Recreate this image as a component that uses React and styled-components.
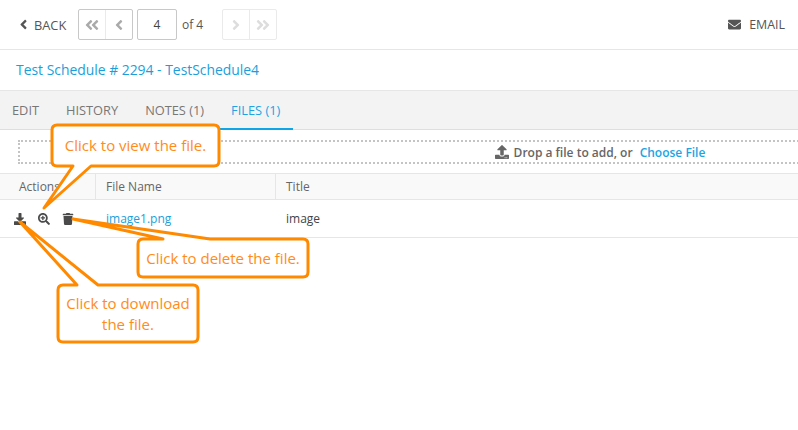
import React from 'react';
import styled, { createGlobalStyle } from 'styled-components';
import { FaAngleLeft, FaAngleRight, FaAngleDoubleLeft, FaAngleDoubleRight, FaEnvelope, FaUpload, FaDownload, FaSearchPlus, FaTrash } from 'react-icons/fa';

const GlobalStyle = createGlobalStyle`
    html, body {
        margin: 0;
        padding: 0;
        background: white;
        overflow: hidden;
    }
    body {
        font-family: "Open Sans", "Liberation Sans", sans-serif;
        font-size: 12px;
        color: #555;
    }
`;

const Page = styled.div`
    position: relative;
    width: 798px;
    height: 430px;
    overflow: hidden;
`;

const TopBar = styled.div`
    display: flex;
    align-items: center;
    height: 49px;
    padding: 0 13px 0 17px;
    border-bottom: 1px solid #e6e6e6;
`;

const BackLink = styled.div`
    display: flex;
    align-items: center;
    gap: 3px;
    width: 61px;
    font-size: 12.8px;
    color: #555;
    svg { font-size: 15px; margin-left: -1px; }
`;

const PagerGroup = styled.div`
    display: flex;
    width: 55px;
    height: 31px;
    box-sizing: border-box;
    border: 1px solid ${props => props.$disabled ? '#eaeaea' : '#c8c8c8'};
    border-radius: 2px;
    color: ${props => props.$disabled ? '#ddd' : '#aaa'};
`;

const PagerButton = styled.div`
    display: flex;
    flex: 1;
    align-items: center;
    justify-content: center;
    font-size: 16px;
    & + & { border-left: 1px solid ${props => props.$disabled ? '#eaeaea' : '#c8c8c8'}; }
`;

const PageInput = styled.div`
    display: flex;
    align-items: center;
    justify-content: center;
    width: 40px;
    height: 31px;
    box-sizing: border-box;
    margin-left: 4px;
    border: 1px solid #c8c8c8;
    border-radius: 2px;
    font-size: 12px;
    color: #444;
`;

const PageCount = styled.div`
    width: 40px;
    margin-left: 5px;
    color: #555;
    font-size: 12px;
`;

const EmailLink = styled.div`
    display: flex;
    align-items: center;
    gap: 8px;
    margin-left: auto;
    color: #555;
    font-size: 12.4px;
    svg { font-size: 13px; }
`;

const TitleRow = styled.div`
    height: 40px;
    padding-left: 16px;
    font-size: 13.9px;
    line-height: 40px;
    color: #1a9fdb;
`;

const TabBar = styled.div`
    display: flex;
    height: 38px;
    background: #f3f3f3;
    border-top: 1px solid #e6e6e6;
    border-bottom: 1px solid #dedede;
    padding-left: 12px;
    gap: 27px;
`;

const Tab = styled.div`
    position: relative;
    line-height: 38px;
    font-size: 12.8px;
    color: ${props => props.$active ? '#1ca4e4' : '#777'};
    &::after {
        content: ${props => props.$active ? '""' : 'none'};
        position: absolute;
        left: -13px;
        right: -13px;
        bottom: -1px;
        height: 2px;
        background: #0ea5e9;
    }
`;

const UploadRow = styled.div`
    height: 44px;
    box-sizing: border-box;
    padding: 10px 0 0 18px;
    border-bottom: 1px solid #e6e6e6;
`;

const DropZone = styled.div`
    display: flex;
    align-items: center;
    justify-content: center;
    gap: 5px;
    width: 1164px;
    height: 24px;
    box-sizing: border-box;
    border: 2px dotted #c4c4c4;
    font-size: 12px;
    font-weight: 600;
    color: #666;
    svg { font-size: 14px; }
`;

const ChooseFile = styled.span`
    margin-left: 2px;
    color: #1ca4e4;
`;

const Row = styled.div`
    display: grid;
    grid-template-columns: 95px 180px 1fr;
    align-items: center;
    border-bottom: 1px solid #e6e6e6;
    height: ${props => props.$height}px;
    box-sizing: border-box;
    background: ${props => props.$header ? '#f9f9f9' : 'white'};
`;

const HeadCell = styled.div`
    height: 100%;
    line-height: 25px;
    padding-left: ${props => props.$pad}px;
    font-size: 12px;
    color: #666;
    box-sizing: border-box;
    & + & { border-left: 1px solid #e6e6e6; }
`;

const ActionIcons = styled.div`
    display: flex;
    align-items: center;
    padding-left: 14px;
    gap: 12px;
    color: #4a4a4a;
    font-size: 12px;
`;

const FileCell = styled.div`
    padding-left: 11px;
    font-size: 12px;
    color: #1a9fdb;
`;

const TitleCell = styled.div`
    padding-left: 11px;
    font-size: 12px;
    color: #444;
`;

const CalloutBox = styled.div`
    position: absolute;
    left: ${props => props.$x}px;
    top: ${props => props.$y}px;
    width: ${props => props.$w}px;
    height: ${props => props.$h}px;
    svg {
        position: absolute;
        left: 0;
        top: 0;
        overflow: visible;
    }
`;

const CalloutText = styled.div`
    position: absolute;
    inset: 0;
    display: flex;
    align-items: center;
    justify-content: center;
    text-align: center;
    font-size: 15px;
    line-height: 21px;
    color: #ff8c1a;
`;

// outline of a rounded box with the tail spliced in on its top or bottom edge
const outline = (w, h, tail) => {
    const r = 5;
    const top = tail.side === 'top' ? `L${tail.a} 0 L${tail.tx} ${tail.ty} L${tail.b} 0` : '';
    const bottom = tail.side === 'bottom' ? `L${tail.b} ${h} L${tail.tx} ${tail.ty} L${tail.a} ${h}` : '';
    return `M${r} 0 ${top} L${w - r} 0 Q${w} 0 ${w} ${r} L${w} ${h - r} Q${w} ${h} ${w - r} ${h} ${bottom} L${r} ${h} Q0 ${h} 0 ${h - r} L0 ${r} Q0 0 ${r} 0 Z`;
};

const Callout = ({ x, y, w, h, tail, children }) => (
    <CalloutBox $x={x} $y={y} $w={w} $h={h}>
        <svg width={w} height={h}>
            <path d={outline(w, h, tail)} fill="white" stroke="#ff8a00" strokeWidth="3" strokeLinejoin="round" />
        </svg>
        <CalloutText>{children}</CalloutText>
    </CalloutBox>
);

const App = () => (
    <Page>
        <GlobalStyle />
        <TopBar>
            <BackLink><FaAngleLeft /> BACK</BackLink>
            <PagerGroup>
                <PagerButton><FaAngleDoubleLeft /></PagerButton>
                <PagerButton><FaAngleLeft /></PagerButton>
            </PagerGroup>
            <PageInput>4</PageInput>
            <PageCount>of 4</PageCount>
            <PagerGroup $disabled>
                <PagerButton $disabled><FaAngleRight /></PagerButton>
                <PagerButton $disabled><FaAngleDoubleRight /></PagerButton>
            </PagerGroup>
            <EmailLink><FaEnvelope /> EMAIL</EmailLink>
        </TopBar>
        <TitleRow>Test Schedule # 2294 - TestSchedule4</TitleRow>
        <TabBar>
            <Tab>EDIT</Tab>
            <Tab>HISTORY</Tab>
            <Tab>NOTES (1)</Tab>
            <Tab $active>FILES (1)</Tab>
        </TabBar>
        <UploadRow>
            <DropZone>
                <FaUpload /> Drop a file to add, or <ChooseFile>Choose File</ChooseFile>
            </DropZone>
        </UploadRow>
        <Row $header $height={26}>
            <HeadCell $pad={19}>Actions</HeadCell>
            <HeadCell $pad={10}>File Name</HeadCell>
            <HeadCell $pad={10}>Title</HeadCell>
        </Row>
        <Row $height={38}>
            <ActionIcons>
                <FaDownload />
                <FaSearchPlus />
                <FaTrash />
            </ActionIcons>
            <FileCell>image1.png</FileCell>
            <TitleCell>image</TitleCell>
        </Row>

        <Callout x={52} y={125} w={167} h={41} tail={{ side: 'bottom', a: 21, b: 39, tx: -8, ty: 83 }}>
            Click to view the file.
        </Callout>
        <Callout x={138} y={239} w={170} h={38} tail={{ side: 'top', a: 25, b: 72, tx: -65, ty: -20 }}>
            Click to delete the file.
        </Callout>
        <Callout x={58} y={285} w={140} h={57} tail={{ side: 'top', a: 19, b: 40, tx: -38, ty: -63 }}>
            Click to download<br />the file.
        </Callout>
    </Page>
);

export default App;
